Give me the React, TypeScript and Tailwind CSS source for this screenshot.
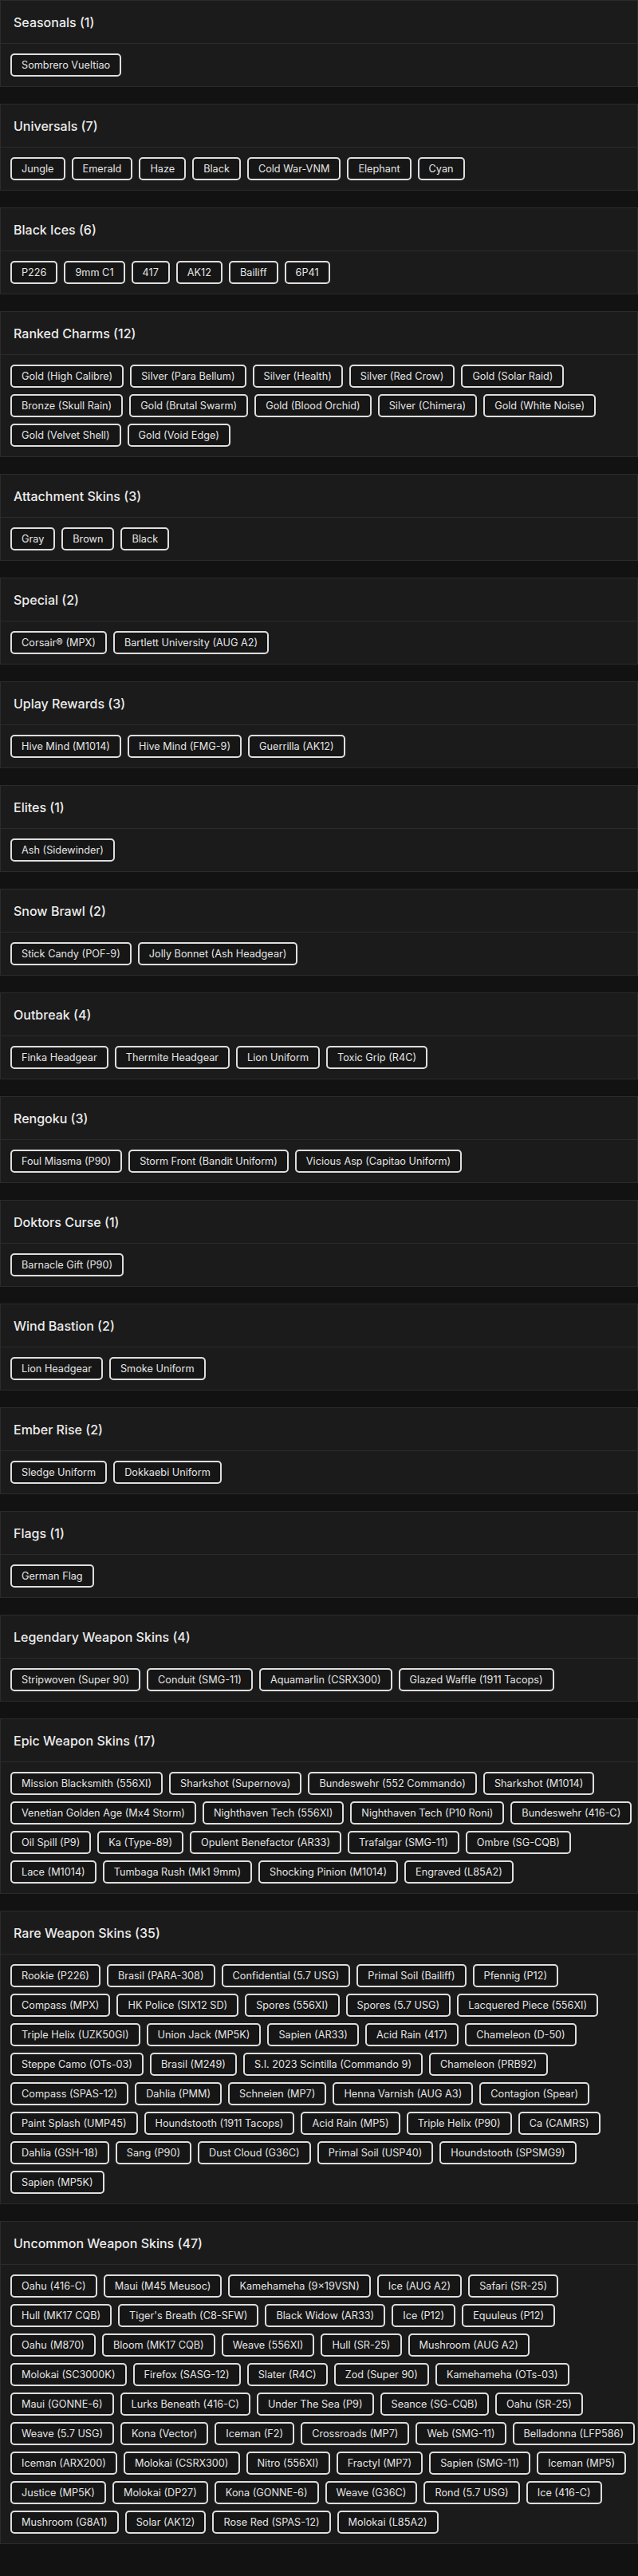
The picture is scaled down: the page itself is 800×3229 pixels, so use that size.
import React from "react";

interface Category {
  title: string;
  rows: string[][];
}

const categories: Category[] = [
  { title: "Seasonals", rows: [["Sombrero Vueltiao"]] },
  {
    title: "Universals",
    rows: [["Jungle", "Emerald", "Haze", "Black", "Cold War-VNM", "Elephant", "Cyan"]],
  },
  { title: "Black Ices", rows: [["P226", "9mm C1", "417", "AK12", "Bailiff", "6P41"]] },
  {
    title: "Ranked Charms",
    rows: [
      [
        "Gold (High Calibre)",
        "Silver (Para Bellum)",
        "Silver (Health)",
        "Silver (Red Crow)",
        "Gold (Solar Raid)",
      ],
      [
        "Bronze (Skull Rain)",
        "Gold (Brutal Swarm)",
        "Gold (Blood Orchid)",
        "Silver (Chimera)",
        "Gold (White Noise)",
      ],
      ["Gold (Velvet Shell)", "Gold (Void Edge)"],
    ],
  },
  { title: "Attachment Skins", rows: [["Gray", "Brown", "Black"]] },
  { title: "Special", rows: [["Corsair® (MPX)", "Bartlett University (AUG A2)"]] },
  {
    title: "Uplay Rewards",
    rows: [["Hive Mind (M1014)", "Hive Mind (FMG-9)", "Guerrilla (AK12)"]],
  },
  { title: "Elites", rows: [["Ash (Sidewinder)"]] },
  { title: "Snow Brawl", rows: [["Stick Candy (POF-9)", "Jolly Bonnet (Ash Headgear)"]] },
  {
    title: "Outbreak",
    rows: [["Finka Headgear", "Thermite Headgear", "Lion Uniform", "Toxic Grip (R4C)"]],
  },
  {
    title: "Rengoku",
    rows: [
      ["Foul Miasma (P90)", "Storm Front (Bandit Uniform)", "Vicious Asp (Capitao Uniform)"],
    ],
  },
  { title: "Doktors Curse", rows: [["Barnacle Gift (P90)"]] },
  { title: "Wind Bastion", rows: [["Lion Headgear", "Smoke Uniform"]] },
  { title: "Ember Rise", rows: [["Sledge Uniform", "Dokkaebi Uniform"]] },
  { title: "Flags", rows: [["German Flag"]] },
  {
    title: "Legendary Weapon Skins",
    rows: [
      [
        "Stripwoven (Super 90)",
        "Conduit (SMG-11)",
        "Aquamarlin (CSRX300)",
        "Glazed Waffle (1911 Tacops)",
      ],
    ],
  },
  {
    title: "Epic Weapon Skins",
    rows: [
      [
        "Mission Blacksmith (556XI)",
        "Sharkshot (Supernova)",
        "Bundeswehr (552 Commando)",
        "Sharkshot (M1014)",
      ],
      [
        "Venetian Golden Age (Mx4 Storm)",
        "Nighthaven Tech (556XI)",
        "Nighthaven Tech (P10 Roni)",
        "Bundeswehr (416-C)",
      ],
      [
        "Oil Spill (P9)",
        "Ka (Type-89)",
        "Opulent Benefactor (AR33)",
        "Trafalgar (SMG-11)",
        "Ombre (SG-CQB)",
      ],
      ["Lace (M1014)", "Tumbaga Rush (Mk1 9mm)", "Shocking Pinion (M1014)", "Engraved (L85A2)"],
    ],
  },
  {
    title: "Rare Weapon Skins",
    rows: [
      [
        "Rookie (P226)",
        "Brasil (PARA-308)",
        "Confidential (5.7 USG)",
        "Primal Soil (Bailiff)",
        "Pfennig (P12)",
      ],
      [
        "Compass (MPX)",
        "HK Police (SIX12 SD)",
        "Spores (556XI)",
        "Spores (5.7 USG)",
        "Lacquered Piece (556XI)",
      ],
      [
        "Triple Helix (UZK50GI)",
        "Union Jack (MP5K)",
        "Sapien (AR33)",
        "Acid Rain (417)",
        "Chameleon (D-50)",
      ],
      [
        "Steppe Camo (OTs-03)",
        "Brasil (M249)",
        "S.I. 2023 Scintilla (Commando 9)",
        "Chameleon (PRB92)",
      ],
      [
        "Compass (SPAS-12)",
        "Dahlia (PMM)",
        "Schneien (MP7)",
        "Henna Varnish (AUG A3)",
        "Contagion (Spear)",
      ],
      [
        "Paint Splash (UMP45)",
        "Houndstooth (1911 Tacops)",
        "Acid Rain (MP5)",
        "Triple Helix (P90)",
        "Ca (CAMRS)",
      ],
      [
        "Dahlia (GSH-18)",
        "Sang (P90)",
        "Dust Cloud (G36C)",
        "Primal Soil (USP40)",
        "Houndstooth (SPSMG9)",
      ],
      ["Sapien (MP5K)"],
    ],
  },
  {
    title: "Uncommon Weapon Skins",
    rows: [
      [
        "Oahu (416-C)",
        "Maui (M45 Meusoc)",
        "Kamehameha (9x19VSN)",
        "Ice (AUG A2)",
        "Safari (SR-25)",
      ],
      [
        "Hull (MK17 CQB)",
        "Tiger's Breath (C8-SFW)",
        "Black Widow (AR33)",
        "Ice (P12)",
        "Equuleus (P12)",
      ],
      ["Oahu (M870)", "Bloom (MK17 CQB)", "Weave (556XI)", "Hull (SR-25)", "Mushroom (AUG A2)"],
      [
        "Molokai (SC3000K)",
        "Firefox (SASG-12)",
        "Slater (R4C)",
        "Zod (Super 90)",
        "Kamehameha (OTs-03)",
      ],
      [
        "Maui (GONNE-6)",
        "Lurks Beneath (416-C)",
        "Under The Sea (P9)",
        "Seance (SG-CQB)",
        "Oahu (SR-25)",
      ],
      [
        "Weave (5.7 USG)",
        "Kona (Vector)",
        "Iceman (F2)",
        "Crossroads (MP7)",
        "Web (SMG-11)",
        "Belladonna (LFP586)",
      ],
      [
        "Iceman (ARX200)",
        "Molokai (CSRX300)",
        "Nitro (556XI)",
        "Fractyl (MP7)",
        "Sapien (SMG-11)",
        "Iceman (MP5)",
      ],
      [
        "Justice (MP5K)",
        "Molokai (DP27)",
        "Kona (GONNE-6)",
        "Weave (G36C)",
        "Rond (5.7 USG)",
        "Ice (416-C)",
      ],
      ["Mushroom (G8A1)", "Solar (AK12)", "Rose Red (SPAS-12)", "Molokai (L85A2)"],
    ],
  },
];

const Chip: React.FC<{ label: string }> = ({ label }) => (
  <span className="h-[29px] px-3 flex items-center rounded-[5px] border-2 border-[#dedede] bg-[#161616] text-[12.7px] text-[#e4e4e4] whitespace-nowrap">
    {label}
  </span>
);

const CategoryCard: React.FC<{ data: Category }> = ({ data }) => {
  const count = data.rows.reduce((n, r) => n + r.length, 0);

  return (
    <section className="mb-[21px] border border-[#2b2b2b] bg-[#1b1b1b]">
      <div className="h-[54px] px-4 flex items-center border-b border-[#2b2b2b]">
        <h2 className="text-[16px] font-medium text-[#ececec]">
          {data.title} ({count})
        </h2>
      </div>
      <div className="p-3 flex flex-col gap-2">
        {data.rows.map((row, i) => (
          <div key={i} className="flex gap-2">
            {row.map((item) => (
              <Chip key={item} label={item} />
            ))}
          </div>
        ))}
      </div>
    </section>
  );
};

export default function App() {
  return (
    <div className="min-h-screen bg-[#121212] font-['Inter','Liberation_Sans',sans-serif]">
      {categories.map((c) => (
        <CategoryCard key={c.title} data={c} />
      ))}
    </div>
  );
}
